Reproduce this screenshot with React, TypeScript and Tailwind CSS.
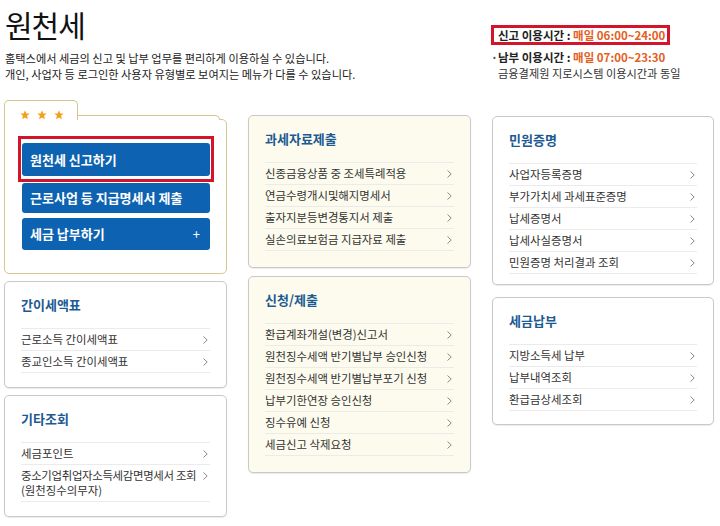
import React from "react";

const FONT = { fontFamily: '"Malgun Gothic", "Noto Sans CJK KR", "Noto Sans", sans-serif' };

type Item = { label: string; sub?: string };

function Chevron() {
  return (
    <svg width="5" height="8" viewBox="0 0 5 8" className="shrink-0">
      <path d="M0.5 0.5 L4.2 4 L0.5 7.5" fill="none" stroke="#8a8a8a" strokeWidth="1" />
    </svg>
  );
}

function Star() {
  return (
    <svg width="10" height="10" viewBox="0 0 10 10">
      <path
        d="M5 0.3 L6.3 3.4 L9.7 3.6 L7.1 5.8 L7.9 9.2 L5 7.4 L2.1 9.2 L2.9 5.8 L0.3 3.6 L3.7 3.4 Z"
        fill="#f3a11c"
      />
    </svg>
  );
}

function MenuCard({
  title,
  items,
  cream,
  pb = "pb-4",
}: {
  title: string;
  items: Item[];
  cream?: boolean;
  pb?: string;
}) {
  return (
    <div
      className={`rounded-[5px] border border-[#c9c9c9] px-4 pt-[13px] shadow-[0_1px_1px_rgba(0,0,0,0.08)] ${pb} ${
        cream ? "bg-[#fcfbee]" : "bg-white"
      }`}
    >
      <div className="mb-[13px] h-[20px] text-[13px] font-bold leading-[20px] text-[#1d5a92]">{title}</div>
      <ul className="border-t border-[#ebebeb]">
        {items.map((it) => (
          <li
            key={it.label}
            className="flex items-start justify-between gap-[4px] border-b border-[#ebebeb] py-[3px] pr-[2px] text-[11.4px] leading-[15px] text-[#333]"
          >
            <span className={it.sub ? "tracking-[-0.3px]" : ""}>
              <span className="whitespace-nowrap">{it.label}</span>
              {it.sub && <span className="block tracking-normal">{it.sub}</span>}
            </span>
            <span className="mt-[4px]">
              <Chevron />
            </span>
          </li>
        ))}
      </ul>
    </div>
  );
}

function BlueButton({ label, plus }: { label: string; plus?: boolean }) {
  return (
    <div className="flex h-full items-center justify-between rounded-[3px] bg-[#0d63b1] pl-[8px] pr-[10px] text-[13px] font-bold text-white">
      <span>{label}</span>
      {plus && <span className="text-[13px] font-normal">+</span>}
    </div>
  );
}

function FolderPanel() {
  return (
    <div className="flex flex-col">
      <div className="relative z-10 -mb-px flex items-end">
        <div className="flex h-[20px] w-[74px] items-start gap-[7px] rounded-t-[5px] border-l border-r border-t border-[#d7c690] bg-white pl-[15px] pt-[9px]">
          <Star />
          <Star />
          <Star />
        </div>
        <div className="mr-[7px] h-[5px] flex-1 rounded-tr-[5px] border-r border-t border-[#d7c690] bg-white" />
      </div>
      <div className="flex flex-col rounded-b-[5px] rounded-tr-[5px] border border-[#d7c690] bg-white pb-[23px] pl-[13px] pr-[12px] pt-[16px]">
        <div className="h-[46px] border-[3px] border-[#d2152b] px-[1px] pb-[3px] pt-[4px]">
          <BlueButton label="원천세 신고하기" />
        </div>
        <div className="mx-[4px] mt-px h-[30px]">
          <BlueButton label="근로사업 등 지급명세서 제출" />
        </div>
        <div className="mx-[4px] mt-[5px] h-[32px]">
          <BlueButton label="세금 납부하기" plus />
        </div>
      </div>
    </div>
  );
}

export default function App() {
  return (
    <div className="h-[526px] w-[720px] overflow-hidden bg-white text-[#222]" style={FONT}>
      <header className="flex h-[100px] justify-between pl-[5px]">
        <div>
          <h1 className="mt-[6px] text-[30px] leading-[36px] tracking-[-1px] text-[#111]">원천세</h1>
          <p className="mt-[8px] text-[11.2px] leading-[16px] text-[#222]">
            홈택스에서 세금의 신고 및 납부 업무를 편리하게 이용하실 수 있습니다.
          </p>
          <p className="text-[11.2px] leading-[16px] text-[#222]">
            개인, 사업자 등 로그인한 사용자 유형별로 보여지는 메뉴가 다를 수 있습니다.
          </p>
        </div>
        <div className="mr-[20px] w-[209px] pt-[25px] text-[11.5px]">
          <div className="h-[20px] w-[179px] border-[3px] border-[#d2152b] pl-[4px] font-bold leading-[14px]">
            신고 이용시간 : <span className="text-[#e4601e]">매일 06:00~24:00</span>
          </div>
          <div className="mt-[4px] flex font-bold leading-[16px]">
            <span className="w-[7px] text-[#555]">·</span>
            <span>
              남부 이용시간 : <span className="text-[#e4601e]">매일 07:00~23:30</span>
            </span>
          </div>
          <div className="whitespace-nowrap pl-[7px] text-[11.2px] leading-[16px] text-[#333]">
            금융결제원 지로시스템 이용시간과 동일
          </div>
        </div>
      </header>

      <main className="grid grid-cols-[223px_223px_222px] gap-x-[21px] pl-[4px]">
        <div className="flex flex-col gap-[7px]">
          <FolderPanel />
          <MenuCard
            title="간이세액표"
            pb="pb-[14px]"
            items={[{ label: "근로소득 간이세액표" }, { label: "종교인소득 간이세액표" }]}
          />
          <MenuCard
            title="기타조회"
            pb="pb-[14px]"
            items={[
              { label: "세금포인트" },
              { label: "중소기업취업자소득세감면명세서 조회", sub: "(원천징수의무자)" },
            ]}
          />
        </div>
        <div className="flex flex-col gap-[8px] pt-[15px]">
          <MenuCard
            cream
            title="과세자료제출"
            items={[
              { label: "신종금융상품 중 조세특례적용" },
              { label: "연금수령개시및해지명세서" },
              { label: "출자지분등변경통지서 제출" },
              { label: "실손의료보험금 지급자료 제출" },
            ]}
          />
          <MenuCard
            cream
            title="신청/제출"
            items={[
              { label: "환급계좌개설(변경)신고서" },
              { label: "원천징수세액 반기별납부 승인신청" },
              { label: "원천징수세액 반기별납부포기 신청" },
              { label: "납부기한연장 승인신청" },
              { label: "징수유예 신청" },
              { label: "세금신고 삭제요청" },
            ]}
          />
        </div>
        <div className="flex flex-col gap-[12px] pt-[16px]">
          <MenuCard
            title="민원증명"
            pb="pb-[10px]"
            items={[
              { label: "사업자등록증명" },
              { label: "부가가치세 과세표준증명" },
              { label: "납세증명서" },
              { label: "납세사실증명서" },
              { label: "민원증명 처리결과 조회" },
            ]}
          />
          <MenuCard
            title="세금납부"
            pb="pb-[13px]"
            items={[{ label: "지방소득세 납부" }, { label: "납부내역조회" }, { label: "환급금상세조회" }]}
          />
        </div>
      </main>
    </div>
  );
}
